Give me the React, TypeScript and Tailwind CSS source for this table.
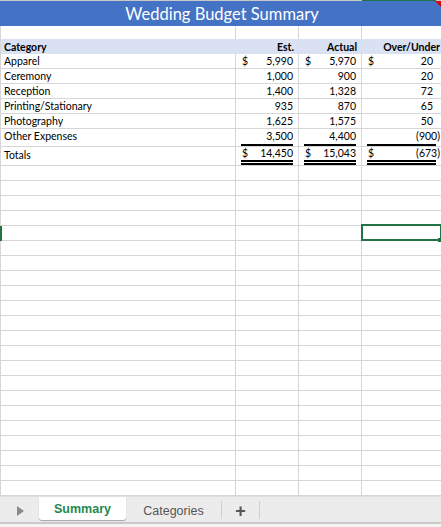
import React from "react";

const GRID = "grid grid-cols-[235px_63px_63px_79px]";
const F = { fontFamily: "Lato, 'Open Sans', sans-serif" };

type Row = { cat: string; est: string; act: string; ou: string; dollar?: boolean };

const rows: Row[] = [
  { cat: "Apparel", est: "5,990", act: "5,970", ou: "20", dollar: true },
  { cat: "Ceremony", est: "1,000", act: "900", ou: "20" },
  { cat: "Reception", est: "1,400", act: "1,328", ou: "72" },
  { cat: "Printing/Stationary", est: "935", act: "870", ou: "65" },
  { cat: "Photography", est: "1,625", act: "1,575", ou: "50" },
];

function Num({ v, dollar, d, neg }: { v: string; dollar?: boolean; d?: boolean; neg?: boolean }) {
  return (
    <div className={`flex justify-between items-end w-full pl-[6px] ${d ? (neg ? "pr-[1px]" : "pr-[8px]") : "pr-[5px]"}`}>
      <span>{dollar ? "$" : ""}</span>
      <span>{v}</span>
    </div>
  );
}

export default function App() {
  const line = "border-r border-b border-[#d6d6d6]";
  return (
    <div className="w-[441px] h-[527px] overflow-hidden bg-white text-[10.5px] text-black leading-none" style={F}>
      {/* top line */}
      <div className="flex h-px">
        <div className="w-[362px] bg-[#c8c8c8]" />
        <div className="w-[74px] bg-[#217346]" />
        <div className="flex-1 bg-[#c8c8c8]" />
      </div>
      {/* title */}
      <div className="relative h-[25px] bg-[#4472c4] flex items-center justify-center text-white text-[16.5px]">
        <span className="mt-[1px] ml-[3px]">Wedding Budget Summary</span>
        <div className="absolute top-0 right-0 w-0 h-0 border-t-[6px] border-t-[#e00000] border-l-[6px] border-l-transparent" />
      </div>
      <div className="border-l border-[#d6d6d6]">
        {/* row 2 */}
        <div className={`${GRID} h-[13px]`}>
          <div className="border-r border-[#d6d6d6]" />
          <div className="border-r border-[#d6d6d6]" />
          <div className="border-r border-[#d6d6d6]" />
          <div />
        </div>
        {/* header */}
        <div className={`${GRID} h-[15px] bg-[#d9e1f2] font-bold items-end pb-[2px]`}>
          <div className="pl-[3px]">Category</div>
          <div className="text-right pr-[5px]">Est.</div>
          <div className="text-right pr-[5px]">Actual</div>
          <div className="text-right pr-[1px]">Over/Under</div>
        </div>
        {rows.map((r) => (
          <div key={r.cat} className={`${GRID} h-[15px]`}>
            <div className={`${line} flex items-end pb-[2px] pl-[3px]`}>{r.cat}</div>
            <div className={`${line} flex items-end pb-[2px]`}><Num v={r.est} dollar={r.dollar} /></div>
            <div className={`${line} flex items-end pb-[2px]`}><Num v={r.act} dollar={r.dollar} /></div>
            <div className="border-b border-[#d6d6d6] flex items-end pb-[2px]"><Num v={r.ou} dollar={r.dollar} d /></div>
          </div>
        ))}
        {/* other expenses */}
        <div className={`${GRID} h-[18px]`}>
          <div className={`${line} flex items-end pb-[5px] pl-[3px]`}>Other Expenses</div>
          {[
            { v: "3,500", d: false },
            { v: "4,400", d: false },
            { v: "(900)", d: true },
          ].map((c, i) => (
            <div key={i} className={`${i < 2 ? line : "border-b border-[#d6d6d6]"} flex flex-col justify-end`}>
              <div className="pb-[3px]"><Num v={c.v} d={c.d} neg={c.d} /></div>
              <div className="mx-[5px] h-[2px] bg-black" />
            </div>
          ))}
        </div>
        {/* totals */}
        <div className={`${GRID} h-[19px]`}>
          <div className={`${line} flex items-end pb-[5px] pl-[3px]`}>Totals</div>
          {[
            { v: "14,450", d: false },
            { v: "15,043", d: false },
            { v: "(673)", d: true },
          ].map((c, i) => (
            <div key={i} className={`${i < 2 ? line : "border-b border-[#d6d6d6]"} flex flex-col justify-end`}>
              <div className="pb-[2px]"><Num v={c.v} dollar d={c.d} neg={c.d} /></div>
              <div className="mx-[5px] h-[2px] bg-black" />
              <div className="h-px" />
              <div className="mx-[5px] h-[2px] bg-black" />
            </div>
          ))}
        </div>
        {/* empty rows */}
        {Array.from({ length: 22 }).map((_, i) => (
          <div key={i} className={`${GRID} h-[15px] relative`}>
            <div className={line} />
            <div className={line} />
            <div className={line} />
            <div className="border-b border-[#d6d6d6] relative">
              {i === 4 && (
                <>
                  <div className="absolute -top-[2px] -left-px -right-px -bottom-px border-2 border-[#217346]" />
                  <div className="absolute -right-px -bottom-[2px] w-[4px] h-[4px] bg-[#217346]" />
                </>
              )}
            </div>
            {i === 4 && <div className="absolute -left-px top-0 w-[2px] h-[15px] bg-[#217346]" />}
          </div>
        ))}
      </div>
      {/* tab bar */}
      <div className="relative h-[31px] bg-[#ececec] border-t border-[#e0e0e0]" style={{ fontFamily: "'Liberation Sans', Arial, sans-serif" }}>
        <div className="flex items-start h-[26px]">
          <div className="w-[39px] h-full flex items-center justify-center pl-[1px] pt-[2px]">
            <div className="w-0 h-0 border-y-[5px] border-y-transparent border-l-[7px] border-l-[#8a8a8a]" />
          </div>
          <div className="w-[87px] h-[23px] bg-white rounded-b-[3px] shadow-[0_1px_1px_rgba(0,0,0,0.3)] flex items-center justify-center text-[12.5px] font-bold text-[#1f8a4c] pt-[2px]">
            Summary
          </div>
          <div className="w-[95px] h-full flex items-center justify-center text-[12.5px] text-[#555] pt-[2px]">
            Categories
          </div>
          <div className="w-px h-[18px] mt-[4px] bg-[#cfcfcf]" />
          <div className="w-[37px] h-full flex items-center justify-center text-[18px] text-[#555] pt-[2px] font-bold">
            +
          </div>
          <div className="w-px h-[18px] mt-[4px] bg-[#cfcfcf]" />
        </div>
        <div className="absolute left-0 right-0 bottom-[3px] h-[2px] bg-[#c9c9c9]" />
        <div className="absolute left-0 right-0 bottom-0 h-[3px] bg-[#f4f4f4]" />
      </div>
    </div>
  );
}
